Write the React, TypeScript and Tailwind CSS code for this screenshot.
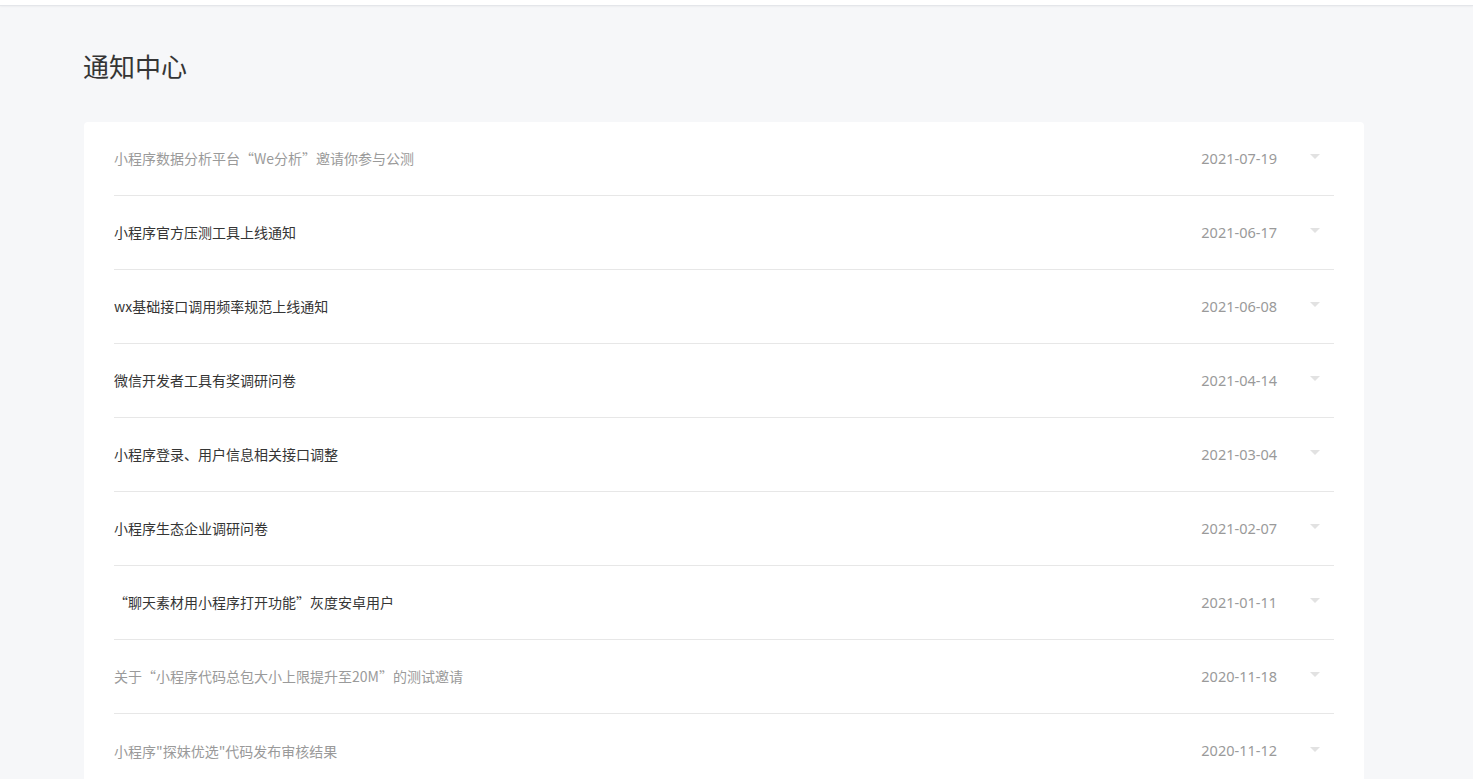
import React from 'react';

type Notice = {
  title: string;
  date: string;
  read: boolean;
};

const notices: Notice[] = [
  { title: '小程序数据分析平台“We分析”邀请你参与公测', date: '2021-07-19', read: true },
  { title: '小程序官方压测工具上线通知', date: '2021-06-17', read: false },
  { title: 'wx基础接口调用频率规范上线通知', date: '2021-06-08', read: false },
  { title: '微信开发者工具有奖调研问卷', date: '2021-04-14', read: false },
  { title: '小程序登录、用户信息相关接口调整', date: '2021-03-04', read: false },
  { title: '小程序生态企业调研问卷', date: '2021-02-07', read: false },
  { title: '“聊天素材用小程序打开功能”灰度安卓用户', date: '2021-01-11', read: false },
  { title: '关于“小程序代码总包大小上限提升至20M”的测试邀请', date: '2020-11-18', read: true },
  { title: '小程序"探妹优选"代码发布审核结果', date: '2020-11-12', read: true },
];

const cjk = { fontFamily: '"Noto Sans CJK SC", "Noto Sans", sans-serif' };
const latin = { fontFamily: '"Noto Sans", "Noto Sans CJK SC", sans-serif' };

export default function App() {
  return (
    <div className="min-h-screen bg-[#f6f7f9]" style={cjk}>
      {/* top bar */}
      <div className="h-[6px] bg-white border-b border-[#e4e6ea] shadow-[0_1px_2px_rgba(0,0,0,0.04)]" />

      <div className="px-[84px]">
        <h1 className="ml-[-1px] pt-[40px] pb-[36px] text-[26px] leading-[40px] text-[#353535] font-normal">
          通知中心
        </h1>

        <div className="w-[1280px] bg-white rounded-[4px] px-[30px]">
          {notices.map((n, i) => (
            <div
              key={i}
              className={`flex items-center h-[74px] ${i < notices.length - 1 ? 'border-b border-[#e7e7e7]' : ''}`}
            >
              <div
                className={`flex-1 min-w-0 truncate text-[14px] ${n.read ? 'text-[#9a9a9a]' : 'text-[#353535]'}`}
              >
                {n.title}
              </div>
              <div className="text-[14.5px] text-[#9a9a9a]" style={latin}>
                {n.date}
              </div>
              <div className="w-[57px] flex justify-end pr-[14px]">
                <svg width="10" height="5" viewBox="0 0 10 5" className="mt-[-4px]">
                  <path d="M0 0h10L5 5z" fill="#e2e2e2" />
                </svg>
              </div>
            </div>
          ))}
        </div>
      </div>
    </div>
  );
}
